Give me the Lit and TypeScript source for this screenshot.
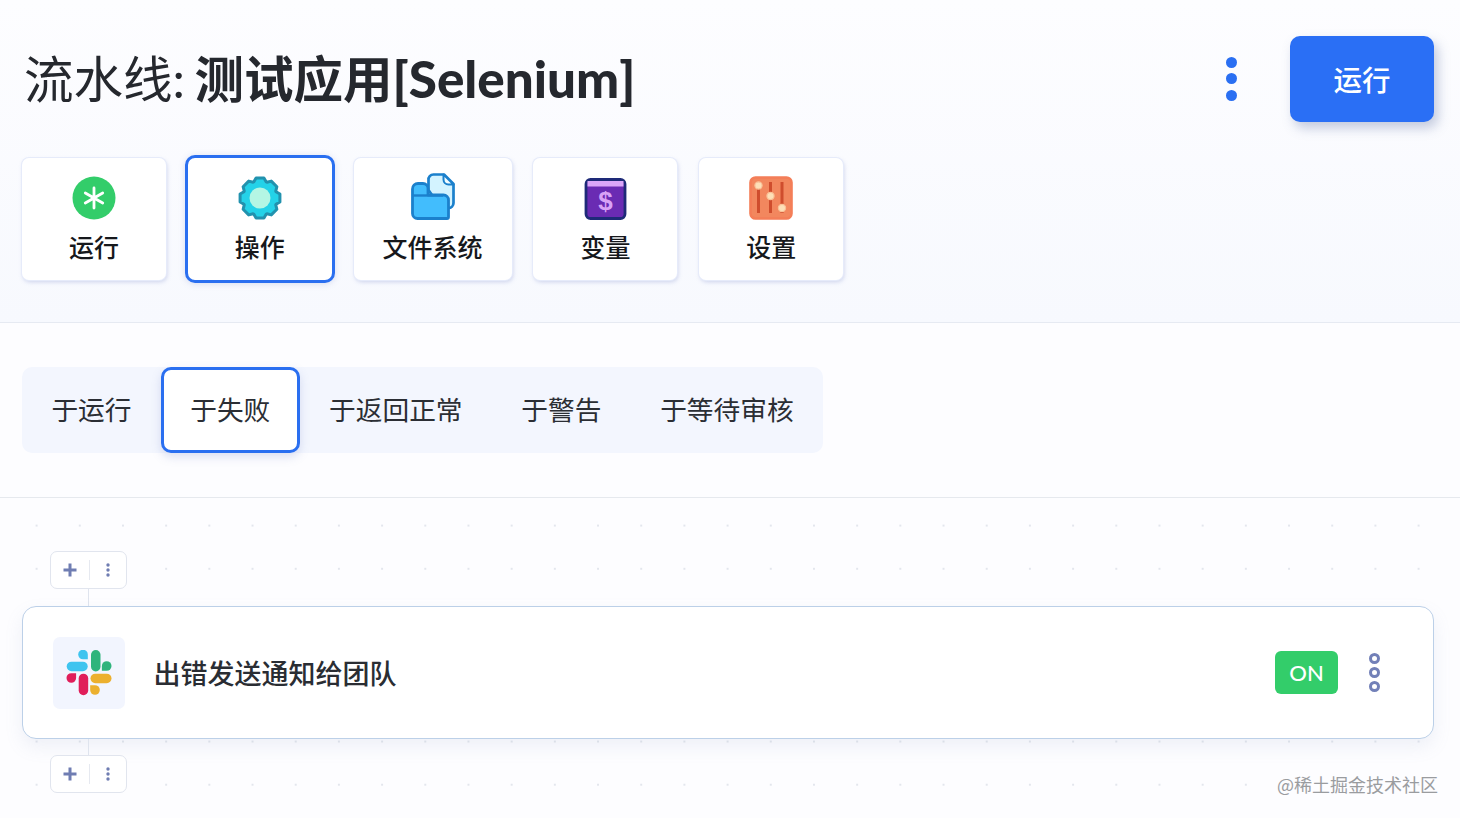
import { LitElement, html, css, svg } from "lit";
import { customElement } from "lit/decorators.js";

const gearPath = (() => {
  const pts: string[] = [];
  const teeth = 8;
  for (let i = 0; i < teeth; i++) {
    const a = (i / teeth) * Math.PI * 2 - Math.PI / 2;
    const w = Math.PI / teeth;
    const p = (r: number, t: number) => `${(22 + r * Math.cos(t)).toFixed(2)} ${(22 + r * Math.sin(t)).toFixed(2)}`;
    pts.push(`${i === 0 ? "M" : "L"}${p(17.2, a - w * 0.95)}`);
    pts.push(`L${p(20.3, a - w * 0.5)}`);
    pts.push(`L${p(20.3, a + w * 0.5)}`);
    pts.push(`L${p(17.2, a + w * 0.95)}`);
  }
  return pts.join("") + "Z";
})();

const icons: Record<string, unknown> = {
  run: svg`<circle cx="22" cy="22" r="21.5" fill="#33cd6a"/><path d="M22 12v20M13.3 17l17.4 10M30.7 17l-17.4 10" stroke="#fff" stroke-width="2.8" stroke-linecap="round" fill="none"/>`,
  gear: svg`<path d=${gearPath} fill="#24d2e8" stroke="#2292ae" stroke-width="3" stroke-linejoin="round"/><circle cx="22" cy="22" r="10.5" fill="#b4f6e4"/>`,
  files: svg`<path d="M17.5 14V4a5 5 0 0 1 5-5.5H33l9.5 9.5V27a5 5 0 0 1-5 5H30z" fill="#d3f3ff" stroke="#1b80cc" stroke-width="2.7" stroke-linejoin="round"/><path d="M32.5-1.500v5a5 5 0 0 0 5 5h5z" fill="#f2fcff" stroke="#1b80cc" stroke-width="2" stroke-linejoin="round"/><path d="M1.5 13a5.500 5.500 0 0 1 5.500-5.500h5a5 5 0 0 1 5 5V19h15.500a5 5 0 0 1 5 5v17a1.500 1.500 0 0 1-1.500 1.500H6.500a5 5 0 0 1-5-5z" fill="#42bdfd" stroke="#1b80cc" stroke-width="2.8" stroke-linejoin="round"/><path d="M1.500 19.500H32" stroke="#1b80cc" stroke-width="2.4"/>`,
  vars: svg`<rect x="3" y="3.500" width="39" height="39" rx="4.500" fill="#6a2bb3" stroke="#1e2a78" stroke-width="2.8"/><rect x="4.500" y="5" width="36" height="5.500" fill="#dba6f8"/><text x="22.500" y="33.500" text-anchor="middle" class="dollar">$</text>`,
  settings: svg`<rect x="1.500" y="1.500" width="41" height="41" rx="5" fill="#f2875e" stroke="#f47e58" stroke-width="2.6"/><path d="M9.500 6v31M21.500 6v31M33 6v31" stroke="#cf4d2d" stroke-width="3"/><g fill="#fde0b8" stroke="#f9c197" stroke-width="1.2"><circle cx="9.500" cy="9.500" r="3.600"/><circle cx="21.500" cy="20" r="3.600"/><circle cx="33" cy="32" r="3.600"/></g>`,
};

const cards = [
  { key: "run", label: "运行", cls: "w144" },
  { key: "gear", label: "操作", cls: "w150 active" },
  { key: "files", label: "文件系统", cls: "w158" },
  { key: "vars", label: "变量", cls: "w144" },
  { key: "settings", label: "设置", cls: "w144" },
];

const tabs = ["于运行", "于失败", "于返回正常", "于警告", "于等待审核"];

@customElement("app-root")
export class AppRoot extends LitElement {
  static styles = css`
    :host {
      display: block;
      width: 1460px;
      height: 818px;
      overflow: hidden;
      position: relative;
      background: #fff;
      font-family: "Noto Sans CJK SC", sans-serif;
    }
    .head {
      height: 322px;
      box-sizing: content-box;
      border-bottom: 1px solid #e6eaf2;
      background: linear-gradient(#fdfdff, #f7f9fe);
    }
    .top {
      display: flex;
      align-items: center;
      height: 86px;
      margin: 0 26px 0 24px;
      padding-top: 36px;
    }
    h1 {
      margin: -2px 0 0;
      flex: 1;
      font-size: 49.5px;
      font-weight: 400;
      line-height: 86px;
      color: #25282e;
      font-family: Lato, "Noto Sans CJK SC", sans-serif;
      white-space: nowrap;
      word-spacing: -3px;
    }
    h1 b {
      font-weight: 700;
    }
    h1 .latin {
      font-size: 51.2px;
      font-weight: 900;
    }
    .kebab {
      display: flex;
      flex-direction: column;
      gap: 5.5px;
      margin-right: 53px;
      margin-top: -1px;
    }
    .kebab i {
      width: 11px;
      height: 11px;
      border-radius: 50%;
      background: #2a6ff2;
    }
    .runbtn {
      width: 144px;
      height: 86px;
      border: 0;
      border-radius: 10px;
      padding: 0 0 2px;
      background: #2a6ff5;
      color: #fff;
      font: 500 28.5px "Noto Sans CJK SC", sans-serif;
      box-shadow: 4px 6px 12px rgba(90, 110, 160, 0.35);
    }
    .cards {
      display: flex;
      align-items: center;
      height: 128px;
      margin: 33px 0 0 22px;
      gap: 21.8px;
    }
    .card {
      box-sizing: border-box;
      height: 122px;
      background: #fff;
      border-radius: 7px;
      display: flex;
      flex-direction: column;
      align-items: center;
      padding-top: 18px;
      gap: 8px;
      font-size: 25px;
      font-weight: 500;
      line-height: 36px;
      color: #16181c;
      box-shadow: 0 0 0 1px #e6ebfa, 1px 2px 4px rgba(120, 135, 200, 0.35);
    }
    .card svg {
      width: 44px;
      height: 44px;
      display: block;
      overflow: visible;
    }
    .dollar {
      font: 700 26px "Liberation Sans", sans-serif;
      fill: #d9a2f6;
    }
    .w144 { width: 144px; }
    .w150 { width: 150px; }
    .w158 { width: 158px; }
    .card.active {
      height: 128px;
      margin: 0 -3px;
      border: 3px solid #2a6ff0;
      border-radius: 10px;
      box-shadow: 0 1px 6px rgba(120, 135, 200, 0.25);
    }
    .tabzone {
      height: 175px;
      box-sizing: border-box;
      padding: 44px 0 0 22px;
      border-bottom: 1px solid #e6e9ee;
      background: #fdfdff;
    }
    .tabs {
      display: inline-flex;
      height: 86px;
      background: #f3f6fe;
      border-radius: 10px;
    }
    .tab {
      box-sizing: border-box;
      padding: 0 29.4px;
      font-size: 26.7px;
      line-height: 84px;
      color: #2b2e34;
      white-space: nowrap;
    }
    .tab.active {
      background: #fff;
      border: 3px solid #2a6ff0;
      border-radius: 10px;
      line-height: 78px;
      padding: 0 26.4px;
      box-shadow: 0 4px 10px rgba(120, 135, 200, 0.25);
    }
    .flow {
      height: 320px;
      box-sizing: border-box;
      padding: 53px 26px 0 22px;
      background-color: #fdfdff;
      background-image: radial-gradient(circle, #e3e6ed 1px, transparent 1.5px);
      background-size: 43.2px 43.2px;
      background-position: 15px 6px;
    }
    .adder {
      box-sizing: border-box;
      width: 77px;
      height: 38px;
      margin-left: 28px;
      background: #fff;
      border: 1px solid #e1e5ee;
      border-radius: 7px;
      display: flex;
      align-items: center;
    }
    .adder .plus {
      width: 38px;
      display: flex;
      justify-content: center;
    }
    .adder .sep {
      width: 1px;
      height: 20px;
      background: #e6e9f0;
    }
    .adder .more {
      flex: 1;
      display: flex;
      justify-content: center;
    }
    .adder svg { display: block; }
    .line {
      width: 1px;
      height: 17px;
      margin-left: 66px;
      background: #dfe4ee;
    }
    .line.short { height: 16px; }
    .step {
      box-sizing: border-box;
      height: 133px;
      display: flex;
      align-items: center;
      padding: 0 53px 0 30px;
      background: #fff;
      border: 1px solid #bcd0e8;
      border-radius: 14px;
      box-shadow: 0 8px 18px rgba(130, 145, 190, 0.12);
    }
    .logo {
      width: 72px;
      height: 72px;
      border-radius: 7px;
      background: #f2f5fe;
      display: flex;
      align-items: center;
      justify-content: center;
      margin-right: 28.5px;
    }
    .name {
      flex: 1;
      font-size: 27px;
      font-weight: 500;
      color: #2a2d33;
    }
    .on {
      width: 63px;
      height: 43px;
      border-radius: 6px;
      background: #33cd6a;
      color: #fff;
      font: 500 22px/43px Lato, "Noto Sans CJK SC", sans-serif;
      text-align: center;
      margin-right: 31px;
    }
    .rings {
      display: flex;
      flex-direction: column;
      gap: 3.2px;
    }
    .rings i {
      box-sizing: border-box;
      width: 11px;
      height: 11px;
      border: 3.5px solid #7280b8;
      border-radius: 50%;
    }
    .mark {
      position: absolute;
      right: 22px;
      top: 771px;
      font-size: 18px;
      line-height: 26px;
      color: #9a9c9f;
      white-space: nowrap;
    }
  `;

  private adder() {
    return html`<div class="adder">
      <span class="plus"><svg width="16" height="16" viewBox="0 0 16 16"><path d="M8 1.5v13M1.5 8h13" stroke="#6f7db2" stroke-width="3"/></svg></span>
      <span class="sep"></span>
      <span class="more"><svg width="4" height="16" viewBox="0 0 4 16"><circle cx="2" cy="3" r="1.7" fill="#6f7db2"/><circle cx="2" cy="8" r="1.7" fill="#6f7db2"/><circle cx="2" cy="13" r="1.7" fill="#6f7db2"/></svg></span>
    </div>`;
  }

  render() {
    return html`
      <section class="head">
        <div class="top">
          <h1>流水线: <b>测试应用<span class="latin">[Selenium]</span></b></h1>
          <div class="kebab"><i></i><i></i><i></i></div>
          <button class="runbtn">运行</button>
        </div>
        <div class="cards">
          ${cards.map(
            (c) => html`<div class="card ${c.cls}">
              <svg viewBox="0 0 44 44">${icons[c.key]}</svg>
              <span>${c.label}</span>
            </div>`
          )}
        </div>
      </section>
      <section class="tabzone">
        <div class="tabs">
          ${tabs.map((t, i) => html`<div class="tab ${i === 1 ? "active" : ""}">${t}</div>`)}
        </div>
      </section>
      <section class="flow">
        ${this.adder()}
        <div class="line"></div>
        <div class="step">
          <div class="logo">
            <svg width="46" height="46" viewBox="0 0 46 46">
              <rect x="0.7" y="11.7" width="21" height="9.5" rx="4.75" fill="#3fc4ef"/>
              <path d="M21.8 9.3h-4.8a4.8 4.8 0 1 1 4.8-4.8z" fill="#3fc4ef"/>
              <rect x="25" y="0" width="9.5" height="21.5" rx="4.75" fill="#2fb47c"/>
              <path d="M35.9 20.8v-4.8a4.8 4.8 0 1 1 4.8 4.8z" fill="#2fb47c"/>
              <rect x="24.5" y="23.7" width="21" height="9.5" rx="4.75" fill="#ecb02e"/>
              <path d="M24.2 35.2h4.8a4.8 4.8 0 1 1-4.8 4.8z" fill="#ecb02e"/>
              <rect x="12.7" y="23.7" width="9.5" height="21.5" rx="4.75" fill="#e01e5a"/>
              <path d="M10.1 23.2v4.8a4.8 4.8 0 1 1-4.8-4.8z" fill="#e01e5a"/>
            </svg>
          </div>
          <div class="name">出错发送通知给团队</div>
          <div class="on">ON</div>
          <div class="rings"><i></i><i></i><i></i></div>
        </div>
        <div class="line short"></div>
        ${this.adder()}
      </section>
      <div class="mark">@稀土掘金技术社区</div>
    `;
  }
}
